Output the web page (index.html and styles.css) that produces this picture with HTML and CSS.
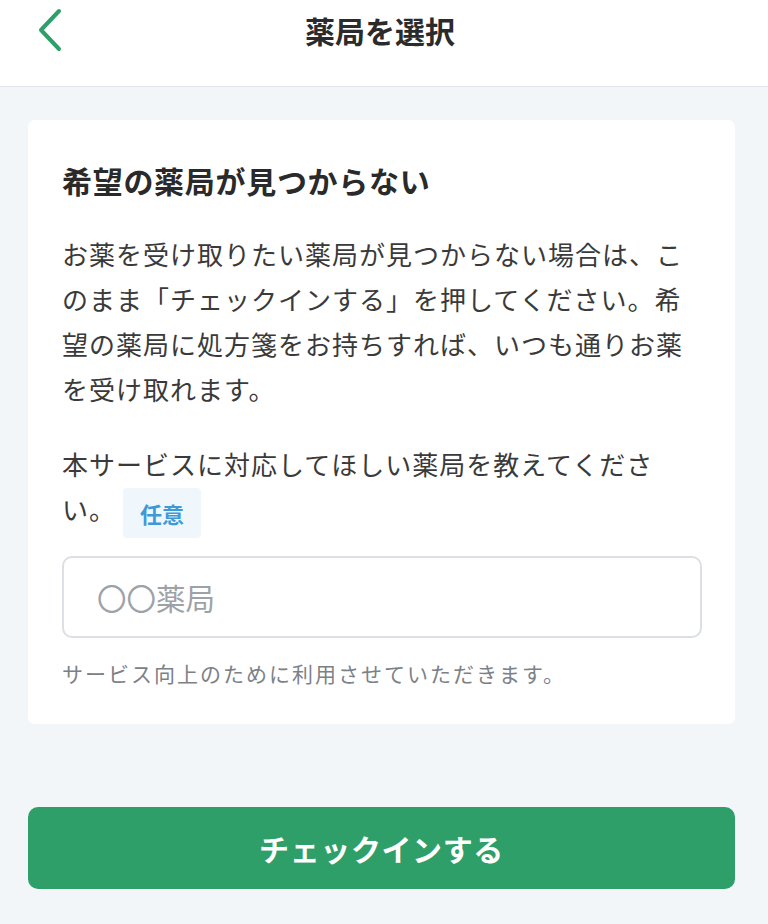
FILE: index.html
```html
<!DOCTYPE html>
<html lang="ja">
<head>
    <meta charset="UTF-8">
    <meta name="viewport" content="width=device-width, initial-scale=1.0">
    <title>薬局を選択</title>
    <link rel="stylesheet" href="styles.css">
</head>
<body>
    <header class="top-bar">
        <button class="back" aria-label="戻る">
            <svg width="28" height="44" viewBox="0 0 28 44">
                <path d="M23 3 L5 22 L23 41" fill="none" stroke="#2e9f69" stroke-width="4" stroke-linecap="round" stroke-linejoin="round"/>
            </svg>
        </button>
        <h1 class="page-title">薬局を選択</h1>
        <span></span>
    </header>

    <main class="main">
        <section class="card">
            <h2 class="card-title">希望の薬局が見つからない</h2>
            <p class="text">お薬を受け取りたい薬局が見つからない場合は、こ<br>のまま「チェックインする」を押してください。希<br>望の薬局に処方箋をお持ちすれば、いつも通りお薬<br>を受け取れます。</p>
            <p class="text ask">本サービスに対応してほしい薬局を教えてくださ<br>い。<span class="tag">任意</span></p>
            <input class="field" type="text" placeholder="〇〇薬局">
            <p class="hint">サービス向上のために利用させていただきます。</p>
        </section>

        <button class="btn-checkin">チェックインする</button>
    </main>
</body>
</html>
```

FILE: styles.css
```css
body {
    margin: 0;
    padding: 0;
    height: 100vh;
    background-color: #f3f6f9;
    font-family: "Noto Sans CJK JP", "Noto Sans", sans-serif;
    color: #333;
    overflow: hidden;
}

.top-bar {
    display: grid;
    grid-template-columns: 1fr auto 1fr;
    align-items: center;
    align-content: start;
    height: 87px;
    padding: 8px 0 0;
    box-sizing: border-box;
    background-color: #fff;
    border-bottom: 1px solid #e2e5e9;
}

.back {
    justify-self: start;
    margin-left: 36px;
    padding: 0;
    width: 28px;
    height: 44px;
    border: none;
    background: none;
    cursor: pointer;
}

.back svg {
    display: block;
}

.page-title {
    margin: 0 0 0 -8px;
    font-size: 30px;
    line-height: 44px;
    font-weight: 700;
    color: #2b2b2b;
}

.main {
    padding: 33px 33px 0 28px;
}

.card {
    background-color: #fff;
    border-radius: 7px;
    padding: 40px 33px 36px 34px;
}

.card-title {
    margin: 0;
    font-size: 30px;
    line-height: 40px;
    letter-spacing: 0.7px;
    font-weight: 700;
    color: #2a2a2a;
}

.text {
    margin: 31px 0 0;
    font-size: 26px;
    line-height: 45px;
    letter-spacing: 1px;
    color: #3a3a3a;
}

.ask {
    margin-top: 30px;
}

.tag {
    display: inline-block;
    vertical-align: middle;
    margin-left: 7px;
    padding: 8px 17px;
    line-height: 34px;
    font-size: 22px;
    font-weight: 700;
    letter-spacing: 0;
    color: #3d9ad6;
    background-color: #f0f7fc;
    border-radius: 4px;
}

.field {
    display: block;
    width: 100%;
    box-sizing: border-box;
    height: 82px;
    margin-top: 18px;
    padding: 0 33px;
    font-family: inherit;
    font-size: 29.5px;
    color: #333;
    border: 2px solid #dcdfe3;
    border-radius: 10px;
    background-color: #fff;
    outline: none;
}

.field::placeholder {
    color: #9da2a8;
}

.hint {
    margin: 20px 0 0;
    font-size: 21px;
    line-height: 30px;
    letter-spacing: 2px;
    color: #7c8187;
}

.btn-checkin {
    display: block;
    width: 100%;
    height: 82px;
    margin-top: 83px;
    border: none;
    border-radius: 10px;
    background-color: #2e9f69;
    color: #fff;
    font-family: inherit;
    font-size: 30px;
    font-weight: 700;
    letter-spacing: 0.6px;
    cursor: pointer;
}
```
